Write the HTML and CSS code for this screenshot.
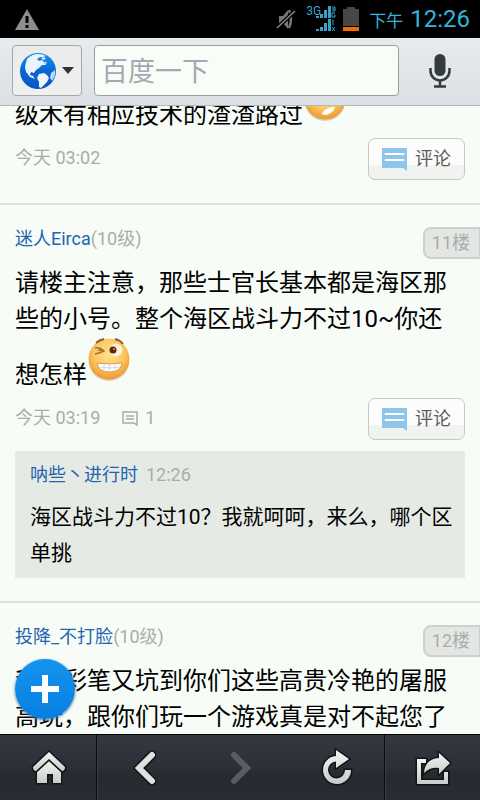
FILE: index.html
```html
<!DOCTYPE html>
<html lang="zh-CN">
<head>
<meta charset="utf-8">
<meta name="viewport" content="width=device-width, initial-scale=1">
<title>百度一下</title>
<link rel="stylesheet" href="styles.css">
</head>
<body>
<svg class="defs" aria-hidden="true">
  <defs>
    <linearGradient id="metal" x1="0" y1="0" x2="0" y2="1">
      <stop offset="0" stop-color="#f4f4f4"/><stop offset="1" stop-color="#c9cbcb"/>
    </linearGradient>
    <radialGradient id="face" cx=".5" cy=".38" r=".62">
      <stop offset="0" stop-color="#ffe391"/><stop offset=".6" stop-color="#fcc65f"/><stop offset="1" stop-color="#ec972e"/>
    </radialGradient>
    <linearGradient id="ocean" x1="0" y1="0" x2="0" y2="1">
      <stop offset="0" stop-color="#1591ee"/><stop offset=".5" stop-color="#0866d3"/><stop offset="1" stop-color="#0756c4"/>
    </linearGradient>
    <symbol id="comment" viewBox="0 0 25 23">
      <path d="M0 0h25v23l-4-3H0z" fill="#8ec5eb"/>
      <path d="M3.500 6h18M3.500 12h18" stroke="#fff" stroke-width="2" stroke-linecap="round"/>
    </symbol>
  </defs>
</svg>

<div class="status">
  <svg class="status-warning" width="24" height="21" viewBox="0 0 24 21" aria-hidden="true">
    <path d="M12 0 24 21H0z" fill="#8e8e8e"/><path d="M10.500 7h3v7h-3zM10.500 16h3v3h-3z" fill="#000"/>
  </svg>
  <svg width="20" height="22" viewBox="0 0 20 22" aria-hidden="true">
    <path d="M3 8h4l5-6v19l-5-6H3z" fill="#777"/>
    <path d="M13 2q4 9 0 18" fill="none" stroke="#777" stroke-width="2.500"/>
    <path d="M1 20 19 3" stroke="#000" stroke-width="4"/><path d="M1 20 19 3" stroke="#888" stroke-width="1.500"/>
  </svg>
  <div class="signal">
    <span class="signal-type">3G</span>
    <svg width="20" height="26" viewBox="0 0 20 26" aria-hidden="true">
      <g fill="#3aa1c4">
        <path d="M0 10h3v2H0zM4 8h3v4H4zM8 4h3v8H8zM12 0h3v12h-3zM0 23h3v2H0zM4 21h3v4H4zM8 17h3v8H8zM12 13h3v12h-3z"/>
      </g>
      <path d="M16 1h3v4h-3M16 3h3M19 7h-3v4h3V9h-1M16 15l1-1v5M16 21l3 4M19 21l-3 4" fill="none" stroke="#3aa1c4"/>
    </svg>
  </div>
  <svg class="status-battery" width="16" height="24" viewBox="0 0 16 24" aria-hidden="true">
    <path d="M4 0h8v2h4v17H0V2h4z" fill="#474747"/><path d="M0 20h16v4H0z" fill="#f26c00"/>
  </svg>
  <span class="status-period">下午</span>
  <span class="status-time">12:26</span>
</div>

<form class="toolbar">
  <button class="engine" type="button" aria-label="选择搜索引擎">
    <svg width="38" height="38" viewBox="0 0 38 38" aria-hidden="true">
      <circle cx="19" cy="19" r="18" fill="url(#ocean)"/>
      <path d="M8 7q5-5 11-5 5 0 8 2l-3 1-3 0-3 2 2 2 3-1 2 2 2 3-4 0-3 3-3 2-2 3-3-1-1 3 3 1 2 3-5-2-4-5-1-5q1-5 2-8z" fill="#eaf4fa"/>
      <path d="M20 22l5-1 3 2 2 3-2 4-3 3-3 3-2-1 0-5-2-4z" fill="#eff5f7"/>
      <path d="M36 18q1 6-3 11l-2-3 1-5z" fill="#b9d9f1"/>
      <path d="M22 6l3-1 2 2-3 1zM26 9l2 2-2 1z" fill="#d5eaf8"/>
    </svg>
    <svg width="12" height="7" viewBox="0 0 12 7" aria-hidden="true"><path d="M0 0h12L6 7z" fill="#303437"/></svg>
  </button>
  <input class="search" type="text" placeholder="百度一下" aria-label="搜索">
  <button class="voice" type="button" aria-label="语音搜索">
    <svg width="22" height="34" viewBox="0 0 22 34" aria-hidden="true">
      <rect x="5.500" y="0" width="11" height="22" rx="5.500" fill="#343b3f"/>
      <path d="M1.500 14v3a9.500 9.500 0 0 0 19 0v-3" fill="none" stroke="#343b3f" stroke-width="2.500"/>
      <path d="M11 26v6M5 32.500h12" stroke="#343b3f" stroke-width="2.500"/>
    </svg>
  </button>
</form>

<main class="thread">
  <article class="post post-scrolled">
    <p class="post-text">级木有相应技术的渣渣路过<svg class="emoji" width="44" height="44" viewBox="0 0 44 44" role="img" aria-label="表情">
      <ellipse cx="22" cy="25" rx="20" ry="19" fill="#b9a58c" opacity=".45"/>
      <circle cx="22" cy="22" r="20.500" fill="url(#face)"/><path d="M19 37q0-4 10-7 5-1 1 4-7 6-11 3z" fill="#fff"/>
    </svg></p>
    <footer class="meta">
      <time>今天 03:02</time>
      <button class="reply" type="button"><svg width="25" height="23" aria-hidden="true"><use href="#comment"/></svg>评论</button>
    </footer>
  </article>

  <article class="post">
    <header class="post-head"><p><a class="author" href="#">迷人Eirca</a><span class="level">(10级)</span></p><span class="floor">11楼</span></header>
    <p class="post-text">请楼主注意，那些士官长基本都是海区那些的小号。整个海区战斗力不过10~你还<br>想怎样<svg class="emoji" width="44" height="44" viewBox="0 0 44 44" role="img" aria-label="眨眼">
      <ellipse cx="22" cy="25" rx="20" ry="19" fill="#b9a58c" opacity=".45"/>
      <circle cx="22" cy="22" r="20.500" fill="url(#face)"/>
      <path d="M9 6q3-3 8-4M28 2q5 1 8 5" fill="none" stroke="#80653a" stroke-width="2"/>
      <path d="M8 11q5-1 9 3-4 2-9 3M11 13l6 1" fill="none" stroke="#a3742f" stroke-width="1.500"/>
      <circle cx="29" cy="13" r="6.500" fill="#fff3d2"/><circle cx="26" cy="13" r="3.500" fill="#5d2612"/><circle cx="27" cy="12" r="1" fill="#d69c6e"/>
      <path d="M10 26q12 2 25 0-1 9-12.500 9T10 26z" fill="#fff" stroke="#d99a45"/>
      <path d="M12 30q10 2 21 0M17 27v7M22.500 27v8M28 27v7" fill="none" stroke="#d3d6e2"/>
    </svg></p>
    <footer class="meta">
      <time>今天 03:19</time>
      <span class="count"><svg width="16" height="15" viewBox="0 0 16 15" aria-hidden="true"><path d="M1 1h14v13l-3-2H1zM4 5h8M4 8h8" fill="none" stroke="#a6aaa7" stroke-width="1.500"/></svg>1</span>
      <button class="reply" type="button"><svg width="25" height="23" aria-hidden="true"><use href="#comment"/></svg>评论</button>
    </footer>
    <section class="quote">
      <p class="quote-head"><a class="author" href="#">呐些丶进行时</a><time>12:26</time></p>
      <p class="quote-text">海区战斗力不过10？我就呵呵，来么，哪个区单挑</p>
    </section>
  </article>

  <article class="post">
    <header class="post-head"><p><a class="author" href="#">投降_不打脸</a><span class="level">(10级)</span></p><span class="floor">12楼</span></header>
    <p class="post-text">我等彩笔又坑到你们这些高贵冷艳的屠服高玩，跟你们玩一个游戏真是对不起您了</p>
  </article>

  <button class="add" type="button" aria-label="添加">
    <svg width="28" height="28" viewBox="0 0 28 28" aria-hidden="true"><path d="M14 0v28M0 14h28" stroke="#fff" stroke-width="6"/></svg>
  </button>
</main>

<nav class="bottom">
  <button type="button" aria-label="主页">
    <svg width="36" height="36" viewBox="0 0 36 36" aria-hidden="true">
      <g stroke="#121416" stroke-width="3" paint-order="stroke" fill="url(#metal)">
        <path d="M18 11 30 22v11h-8v-9h-6v9H6V22z"/>
        <path d="M18 2 34 17q0 4-3 4L18 9 5 21q-3 0-3-4z"/>
      </g>
    </svg>
  </button>
  <button class="divided" type="button" aria-label="后退">
    <svg width="24" height="36" viewBox="0 0 24 36" aria-hidden="true">
      <path d="M19 5 6 18l13 13" fill="none" stroke="#121416" stroke-width="9" stroke-linecap="round"/>
      <path d="M19 5 6 18l13 13" fill="none" stroke="#dfe1e1" stroke-width="6" stroke-linecap="round"/>
    </svg>
  </button>
  <button type="button" aria-label="前进" disabled>
    <svg width="24" height="36" viewBox="0 0 24 36" aria-hidden="true">
      <path d="M5 5l13 13L5 31" fill="none" stroke="#595c60" stroke-width="6" stroke-linecap="round"/>
    </svg>
  </button>
  <button type="button" aria-label="刷新">
    <svg width="36" height="40" viewBox="0 0 36 40" aria-hidden="true">
      <path d="M17 2v6A14 14 0 1 0 32 22h-6A8.500 8.500 0 1 1 17 13.500V20L30 11z" fill="url(#metal)" stroke="#121416" stroke-width="3" paint-order="stroke"/>
    </svg>
  </button>
  <button class="divided" type="button" aria-label="分享">
    <svg width="38" height="36" viewBox="0 0 38 36" aria-hidden="true">
      <g stroke="#121416" stroke-width="3" paint-order="stroke" fill="url(#metal)">
        <path d="M3 9h9v4H7v17h23v-8h4v12H3z"/>
        <path d="M25 3 36 13 25 24v-6q-9-1-15 5 1-14 15-15z"/>
      </g>
    </svg>
  </button>
</nav>
</body>
</html>
```
FILE: styles.css
```css
* { box-sizing: border-box; }

body {
  margin: 0;
  height: 100vh;
  display: flex;
  flex-direction: column;
  overflow: hidden;
  background: #f7fcf7;
  color: #000;
  font-family: Roboto, "Noto Sans CJK SC", sans-serif;
}

p { margin: 0; }
svg { flex: none; }
button { font: inherit; margin: 0; padding: 0; border: 0; background: none; }
a { text-decoration: none; }
.defs { position: absolute; width: 0; height: 0; }

/* status bar */
.status {
  flex: none;
  height: 38px;
  padding: 0 10px 0 15px;
  display: flex;
  align-items: center;
  background: #000;
  color: #36b3dc;
}
.status-warning { margin-right: auto; }
.signal { display: flex; margin-left: 10px; }
.signal-type { font-size: 12px; line-height: 10px; color: #3aa1c4; margin-right: -5px; }
.status-battery { margin-left: 7px; }
.status-period { margin-left: 10px; font-size: 17px; }
.status-time { margin-left: 7px; font-size: 24px; }

/* search toolbar */
.toolbar {
  flex: none;
  height: 68px;
  padding: 7px 0 9px 12px;
  display: flex;
  background: linear-gradient(#e8ebee, #dce0e4);
  border-bottom: 1px solid #b4b8bb;
}
.engine {
  width: 70px;
  padding-right: 2px;
  display: flex;
  align-items: center;
  justify-content: center;
  gap: 5px;
  border: 1px solid #a4a8a8;
  border-radius: 4px;
  background: linear-gradient(#e9ebeb, #f1f0f0);
}
.search {
  flex: 1;
  min-width: 0;
  margin-left: 12px;
  padding: 3px 6px 0;
  border: 1px solid #9b9f9f;
  border-radius: 4px;
  background: #f8fdf8;
  font: 27px Roboto, "Noto Sans CJK SC", sans-serif;
}
.search::placeholder { color: #a3a8b2; opacity: 1; }
.voice { width: 81px; display: flex; align-items: center; justify-content: center; }

/* thread */
.thread { position: relative; flex: 1; min-height: 0; overflow: hidden; }
.post { padding: 22px 15px 23px; border-top: 2px solid #dce0dd; }
.post-scrolled { margin-top: -29px; padding-top: 0; border-top: 0; }
.post-head {
  height: 24px;
  margin-bottom: 14px;
  display: flex;
  align-items: center;
  justify-content: space-between;
  font-size: 18px;
  line-height: 24px;
}
.author { color: #2264b0; }
.level, .meta, .quote time { color: #a9adaa; }
.floor {
  margin: 8px -15px 0 0;
  padding: 2px 9px 2px 7px;
  border: 2px solid #ced2cf;
  border-right-width: 1px;
  border-radius: 8px 0 0 8px;
  background: #e3e6e3;
  color: #aaaeab;
  line-height: 24px;
}
.post-text { font-size: 24px; line-height: 36px; }
.emoji { vertical-align: 2px; }
.meta {
  height: 42px;
  margin-top: 5px;
  display: flex;
  align-items: center;
  font-size: 18px;
  line-height: 24px;
}
.meta time, .count { margin-bottom: 2px; }
.count { display: flex; align-items: center; gap: 7px; margin-left: 22px; }
.reply {
  width: 97px;
  height: 42px;
  margin-left: auto;
  display: flex;
  align-items: center;
  justify-content: center;
  gap: 8px;
  border: 1px solid #c6cac7;
  border-radius: 7px;
  background: linear-gradient(#fbfcfb 66%, #f1f3f1 66%);
  color: #595b59;
  font-size: 18px;
}
.quote { margin-top: 11px; padding: 12px 10px 7px 15px; background: #e6eae5; }
.quote-head { margin-bottom: 12px; font-size: 18px; line-height: 24px; }
.quote time { margin-left: 8px; }
.quote-text { font-size: 21px; line-height: 36px; }

/* floating button over the thread */
.add {
  position: absolute;
  left: 15px;
  bottom: 15px;
  width: 60px;
  height: 60px;
  display: flex;
  align-items: center;
  justify-content: center;
  border-radius: 50%;
  background: linear-gradient(#1494ee, #087ee0);
  box-shadow: 0 1px 3px #4b6f8c;
}

/* navigation */
.bottom {
  flex: none;
  height: 66px;
  display: grid;
  grid-template-columns: repeat(5, 1fr);
  border-top: 1px solid #000;
  background: linear-gradient(#333840, #2d2f37 50%, #272b2f 60%, #292b35);
}
.bottom button { display: flex; align-items: center; justify-content: center; border-left: 1px solid transparent; }
.bottom .divided { border-left-color: #08090b; box-shadow: inset 1px 0 #3d4047; }
```
